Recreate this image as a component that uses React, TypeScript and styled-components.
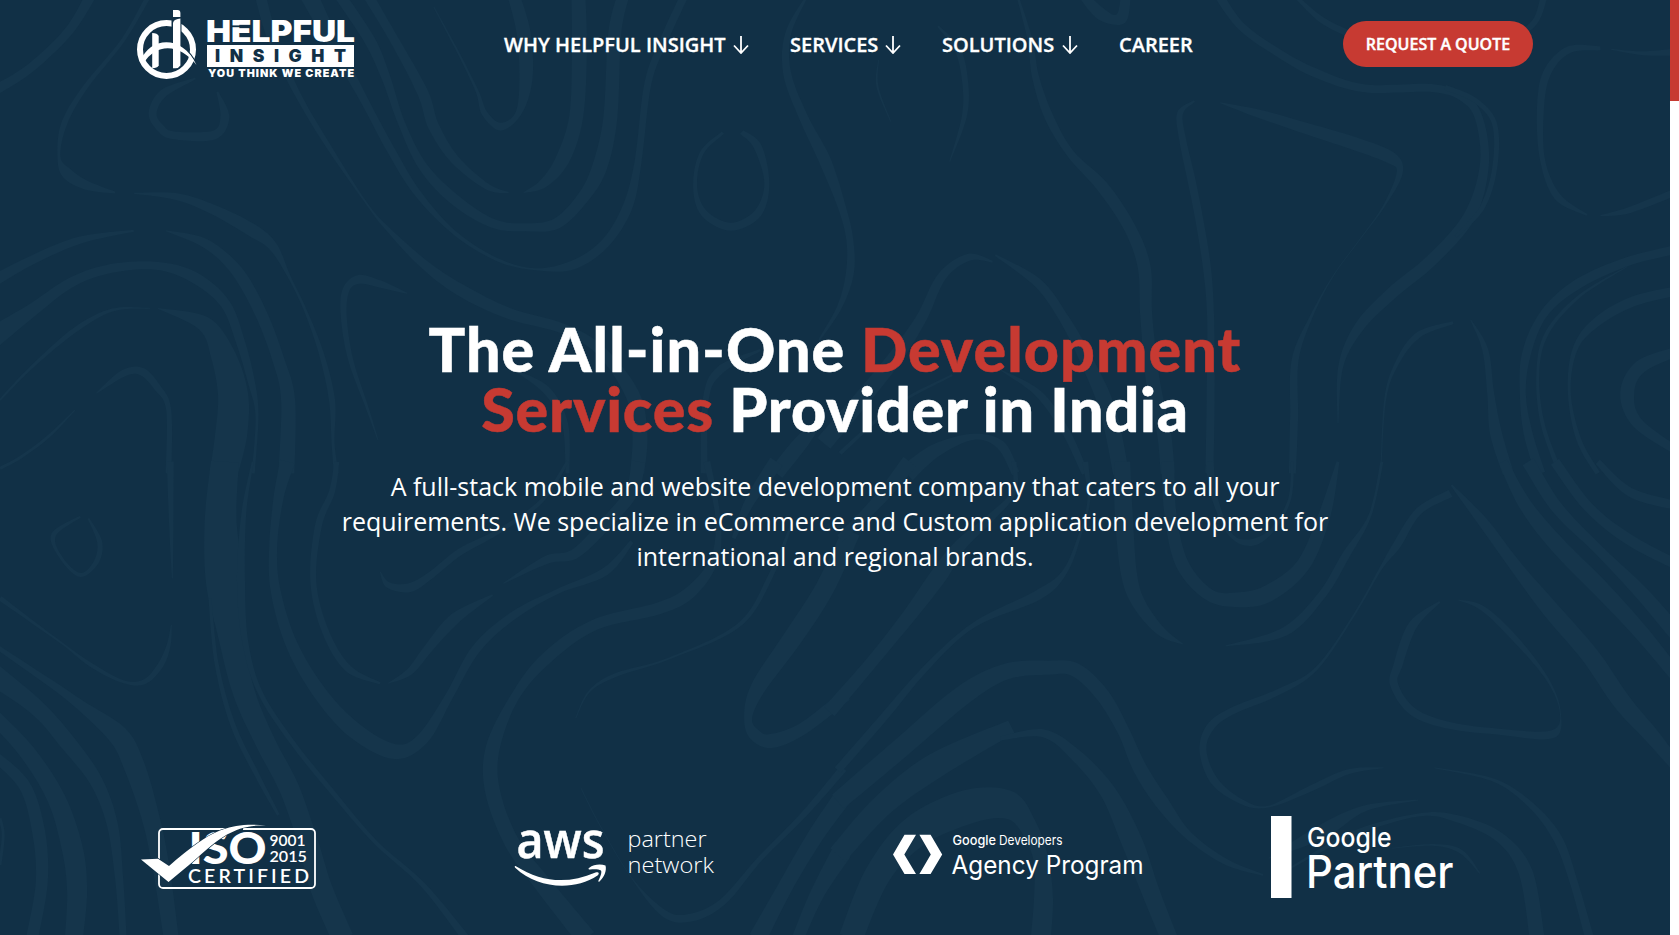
import React from "react";
import styled, { createGlobalStyle } from "styled-components";

const NAVY = "#113046";
const CONTOUR = "#15354b";
const RED = "#c73a32";

const GlobalStyle = createGlobalStyle`
  * { box-sizing: border-box; }
  html, body { margin: 0; padding: 0; background: ${NAVY}; overflow: hidden; }
  body { font-family: "Open Sans", "Noto Sans", sans-serif; color: #fff; }
  h1, p { margin: 0; }
`;

const Viewport = styled.div`
  display: flex;
  width: 100%;
  height: 935px;
  overflow: hidden;
`;

const Page = styled.main`
  position: relative;
  flex: 1;
  min-width: 0;
  display: flex;
  flex-direction: column;
  background: ${NAVY};
  overflow: hidden;
`;

const ScrollTrack = styled.div`
  width: 9px;
  background: #fff;
`;

const ScrollThumb = styled.div`
  height: 101px;
  background: ${RED};
`;

const Backdrop = styled.svg`
  position: absolute;
  inset: 0;
  fill: ${CONTOUR};
`;

const Header = styled.header`
  position: relative;
  display: flex;
  align-items: flex-start;
  height: 88px;
  padding: 8px 137px 0 136px;
`;

const LogoArt = styled.svg`
  flex: none;
  width: 222px;
  height: 74px;
`;

const Nav = styled.nav`
  display: flex;
  gap: 41px;
  margin-left: 146px;
  padding-top: 22px;
`;

const NavLink = styled.a<{ $width: number }>`
  display: flex;
  align-items: center;
  justify-content: space-between;
  width: ${(p) => p.$width}px;
  height: 30px;
  font-size: 20px;
  font-weight: 600;
  letter-spacing: 0;
  -webkit-text-stroke: 0.3px #fff;
  line-height: 30px;
  white-space: nowrap;
`;

const ArrowIcon = styled.svg`
  flex: none;
  width: 16px;
  height: 18px;
  fill: none;
  stroke: #fff;
  stroke-width: 1.8;
`;

const QuoteButton = styled.button`
  width: 190px;
  height: 46px;
  margin: 13px 0 0 auto;
  padding: 0;
  border: 0;
  border-radius: 23px;
  background: ${RED};
  color: #fff;
  font: 600 16px/24px "Open Sans", sans-serif;
  letter-spacing: 0;
  -webkit-text-stroke: 0.4px #fff;
  white-space: nowrap;
`;

const Hero = styled.section`
  position: relative;
  display: flex;
  flex-direction: column;
  align-items: center;
  padding-top: 231px;
  text-align: center;
`;

const Title = styled.h1`
  font: 900 61px/60px Lato, sans-serif;
  -webkit-text-stroke: 0.5px currentColor;
  white-space: nowrap;
`;

const TitleLine = styled.span<{ $spacing: number }>`
  display: block;
  letter-spacing: ${(p) => p.$spacing}px;
`;

const Accent = styled.span`
  color: ${RED};
`;

const Lead = styled.p`
  width: 1010px;
  margin-top: 30px;
  font-size: 25px;
  line-height: 35px;
`;

const Badges = styled.section`
  position: relative;
  display: grid;
  grid-template-columns: repeat(4, 378px);
  margin-top: auto;
  padding: 0 0 33px 137px;
`;

const BadgeArt = styled.svg`
  width: 260px;
  height: 90px;
  fill: #fff;
  overflow: visible;
`;

/* Contour lines: each stroke is a list of x, y, thickness triples. */
type Sheet = { x: number; y: number; strokes: number[][] };

const sheets: Sheet[] = [
  {
    x: 0,
    y: 0,
    strokes: [
      [175, -30, 11, 130, 90, 9, 60, 200, 9, 0, 262, 10, -40, 290, 10],
      [280, -20, 5, 230, 120, 4, 160, 260, 5, 120, 370, 6, 110, 470, 3, 125, 520, 11, 160, 555, 9, 215, 578, 2],
      [250, 580, 1, 330, 590, 7, 400, 630, 10, 470, 690, 13, 510, 740, 9, 540, 830, 3, 570, 930, 3, 600, 1060, 5, 620, 1200, 6, 622, 1330, 3, 628, 1420, 5],
      [760, 880, 1, 710, 852, 7, 670, 838, 9, 646, 870, 7, 642, 950, 6, 655, 1080, 5, 685, 1220, 3, 706, 1320, 1],
      [485, -20, 11, 510, 120, 10, 555, 280, 6, 610, 430, 5, 680, 600, 2, 720, 680, 4, 790, 790, 9, 860, 870, 12, 950, 940, 11, 1050, 985, 10, 1120, 1050, 10, 1180, 1180, 14, 1195, 1300, 15, 1190, 1420, 14],
      [960, 1110, 1, 1020, 1170, 8, 1055, 1270, 6, 1060, 1420, 4],
      [575, -20, 18, 620, 120, 13, 680, 300, 8, 730, 450, 8, 780, 580, 7, 850, 700, 4, 930, 780, 3, 1000, 808, 2, 1070, 795, 9, 1130, 730, 9, 1172, 620, 10, 1192, 480, 7, 1210, 250, 7, 1240, 120, 8, 1280, -20, 8],
      [632, -20, 11, 690, 120, 11, 720, 230, 9, 750, 370, 7, 790, 500, 9, 850, 600, 11, 920, 670, 9, 980, 682, 8, 1040, 670, 11, 1090, 590, 12, 1120, 500, 15, 1140, 350, 14, 1148, 100, 13, 1165, -20, 12],
      [685, -20, 10, 740, 130, 9, 790, 280, 11, 810, 380, 11, 850, 480, 9, 910, 560, 6, 950, 578, 1],
      [978, 578, 1, 1015, 550, 9, 1050, 480, 14, 1076, 350, 14, 1082, 150, 15, 1080, -20, 14],
      [810, 20, 1, 850, 140, 2, 890, 270, 3, 905, 340, 6, 935, 380, 8, 968, 340, 6, 982, 240, 13, 978, 100, 14, 958, -20, 12],
      [365, 235, 2, 305, 280, 8, 285, 340, 8, 300, 385, 8, 325, 406, 8, 400, 405, 9, 420, 350, 9, 406, 275, 2],
      [1350, 398, 3, 1310, 460, 4, 1298, 560, 4, 1315, 640, 7, 1365, 680, 8, 1415, 640, 8, 1432, 550, 5, 1415, 440, 8, 1385, 396, 5],
      [1510, -20, 2, 1472, 100, 6, 1470, 220, 8, 1500, 350, 9, 1540, 480, 12, 1572, 620, 8, 1587, 720, 7, 1587, 820, 8, 1568, 920, 5, 1530, 1020, 2],
      [1420, 1050, 2, 1345, 1110, 8, 1318, 1200, 6, 1315, 1420, 7],
      [1540, 1250, 2, 1500, 1320, 14, 1450, 1420, 15],
      [-20, 850, 12, 60, 780, 9, 150, 720, 7, 250, 692, 2],
      [310, 692, 1, 370, 720, 8, 410, 760, 10, 450, 830, 12, 490, 950, 12, 520, 1080, 12, 538, 1200, 14, 535, 1420, 16],
      [-20, 1020, 22, 60, 930, 13, 130, 850, 10, 200, 808, 9, 290, 797, 8, 360, 830, 11, 420, 910, 10, 450, 1030, 9, 470, 1150, 7, 480, 1250, 3, 473, 1420, 3],
      [0, 1200, 2, 60, 1100, 3, 140, 990, 5, 210, 930, 3, 280, 925, 1],
      [295, 925, 1, 380, 970, 15, 415, 1060, 24, 435, 1180, 30, 432, 1300, 32, 418, 1420, 28],
      [180, 1180, 1, 230, 1120, 7, 265, 1115, 8, 295, 1165, 7, 315, 1230, 5, 315, 1420, 6],
      [140, 1230, 1, 90, 1310, 3, 40, 1370, 3, 0, 1405, 3],
    ],
  },
  {
    x: 840,
    y: 0,
    strokes: [
      [330, -20, 2, 355, 120, 5, 365, 230, 7, 390, 350, 9, 430, 460, 8, 490, 560, 12, 540, 680, 12, 568, 800, 13, 572, 950, 12, 585, 1150, 14, 605, 1300, 14, 612, 1420, 14],
      [450, -20, 8, 490, 45, 12, 525, 55, 12, 534, -20, 10],
      [183, 78, 2, 220, 150, 6, 234, 250, 6, 232, 350, 5, 205, 485, 1],
      [72, 180, 1, 70, 260, 2, 95, 365, 1],
      [705, -20, 9, 750, 80, 8, 820, 160, 8, 890, 220, 9, 980, 265, 8, 1110, 265, 8, 1170, 300, 8, 1196, 370, 8, 1203, 500, 9, 1175, 650, 12, 1105, 780, 12, 1030, 880, 12, 970, 980, 10, 935, 1100, 5, 930, 1270, 1],
      [1130, 262, 5, 1185, 300, 5, 1222, 370, 5, 1223, 500, 5, 1200, 620, 5, 1150, 710, 3],
      [845, -20, 3, 900, 60, 6, 960, 108, 7],
      [1316, -20, 7, 1300, 60, 6, 1265, 110, 7],
      [662, 303, 2, 635, 340, 6, 640, 420, 7, 655, 530, 8, 670, 650, 8, 685, 800, 8, 692, 950, 7, 692, 1200, 8, 690, 1420, 8],
      [710, 308, 1, 780, 340, 8, 860, 380, 11, 960, 430, 13, 1030, 475, 12, 1045, 520, 6, 1015, 620, 2, 970, 720, 1, 920, 830, 1, 880, 950, 3, 850, 1080, 7, 848, 1250, 8, 845, 1420, 7],
      [1420, 145, 4, 1360, 150, 7, 1320, 220, 8, 1308, 330, 7, 1312, 480, 5, 1340, 590, 7, 1395, 645, 2],
      [1420, 647, 1, 1475, 630, 6, 1570, 570, 7],
      [1440, 148, 1, 1500, 160, 4, 1570, 155, 8],
      [-30, 1330, 17, 90, 1100, 15, 150, 960, 11, 190, 830, 9, 240, 772, 7, 285, 785, 2],
      [290, 765, 2, 370, 850, 9, 420, 960, 10, 460, 1080, 13, 500, 1230, 16, 525, 1420, 16],
      [0, 1360, 4, 100, 1220, 3, 210, 1125, 2],
      [300, 1110, 1, 370, 1180, 7, 420, 1290, 8, 458, 1420, 7],
      [125, 1420, 18, 180, 1350, 13, 250, 1310, 6, 300, 1335, 9, 328, 1420, 8],
      [1178, 960, 1, 1205, 1050, 6, 1215, 1180, 7, 1225, 1300, 12, 1248, 1420, 11],
      [1145, 968, 3, 1080, 1005, 6, 1040, 1090, 4, 1018, 1200, 2, 1010, 1420, 1],
      [1570, 745, 9, 1470, 785, 9, 1380, 850, 10, 1315, 940, 8, 1282, 1060, 9, 1275, 1180, 6, 1285, 1300, 9, 1308, 1420, 10],
      [1470, 800, 1, 1380, 890, 3, 1320, 1000, 4, 1303, 1120, 3, 1312, 1270, 4, 1345, 1420, 5],
      [1570, 870, 9, 1480, 905, 10, 1410, 970, 9, 1372, 1050, 5, 1362, 1180, 3, 1380, 1320, 5, 1415, 1420, 5],
      [1570, 1050, 9, 1495, 1100, 13, 1470, 1180, 14, 1490, 1270, 11, 1570, 1360, 8],
    ],
  },
  {
    x: 0,
    y: 465,
    strokes: [
      [150, 155, 2, 100, 210, 5, 115, 280, 3, 150, 330, 4, 180, 290, 5, 186, 230, 5, 165, 160, 2],
      [0, 400, 5, 60, 470, 3, 120, 540, 2, 170, 600, 4, 230, 650, 3, 270, 650, 5, 300, 600, 6, 315, 540, 4, 320, 480, 1],
      [-20, 530, 4, 90, 650, 7, 150, 720, 10, 220, 810, 20, 250, 900, 21, 280, 1050, 18, 300, 1200, 17, 320, 1420, 15],
      [-20, 620, 22, 70, 730, 16, 130, 840, 16, 180, 950, 13, 210, 1080, 11, 223, 1250, 8, 230, 1420, 7],
      [-20, 740, 14, 50, 860, 16, 105, 1000, 18, 135, 1150, 21, 144, 1280, 20, 138, 1420, 18],
      [-20, 860, 10, 45, 960, 12, 72, 1100, 13, 78, 1250, 12, 60, 1420, 12],
      [0, 1060, 3, 6, 1110, 3, 0, 1200, 3],
      [318, -10, 7, 320, 200, 4, 322, 340, 1],
      [420, -10, 28, 412, 170, 32, 420, 350, 38, 430, 500, 26, 455, 680, 22, 495, 830, 20, 540, 970, 20, 575, 1130, 20, 600, 1270, 22, 640, 1420, 22],
      [392, 400, 3, 405, 600, 4, 435, 780, 5, 480, 930, 5, 520, 1050, 3],
      [472, -10, 2, 455, 150, 5, 450, 350, 8, 458, 530, 6, 485, 680, 5, 545, 830, 5, 620, 980, 5, 700, 1130, 4, 790, 1260, 5, 870, 1420, 8],
      [537, -10, 15, 520, 100, 10, 510, 250, 8, 515, 380, 10, 545, 540, 12, 600, 690, 14, 665, 800, 16, 738, 860, 15, 790, 820, 12, 840, 690, 8, 890, 550, 9, 960, 450, 8, 1040, 380, 5, 1130, 320, 8, 1180, 230, 4],
      [629, -10, 5, 620, 80, 6, 595, 180, 7, 585, 350, 6, 608, 500, 7, 650, 610, 7, 710, 655, 2],
      [725, 655, 1, 765, 620, 7, 800, 550, 9, 850, 460, 11, 920, 390, 2],
      [710, 320, 1, 725, 360, 6, 765, 368, 9, 805, 330, 7, 860, 260, 7, 930, 200, 5, 1010, 110, 4, 1060, -10, 3],
      [940, 355, 1, 1020, 285, 8, 1075, 265, 10, 1140, 160, 12, 1180, 80, 13, 1192, -10, 14],
      [1320, -10, 7, 1340, 150, 5, 1335, 280, 8, 1290, 380, 12, 1230, 430, 12, 1110, 480, 11, 1020, 580, 12, 960, 700, 9, 920, 850, 14, 920, 980, 15, 955, 1130, 15, 1010, 1250, 17, 1095, 1420, 20],
      [1450, -10, 15, 1400, 110, 10, 1370, 220, 4],
      [1590, 200, 18, 1540, 370, 19, 1480, 520, 19, 1415, 670, 15, 1397, 760, 8, 1410, 810, 12, 1440, 828, 14, 1500, 790, 12, 1580, 690, 12],
      [1480, 170, 2, 1440, 330, 5, 1380, 480, 4, 1250, 580, 2, 1150, 630, 4, 1100, 680, 2, 1075, 760, 1],
      [1085, 970, 1, 1120, 1080, 1, 1180, 1240, 1, 1240, 1345, 7, 1290, 1358, 8, 1350, 1310, 7, 1420, 1180, 5, 1500, 1050, 6, 1575, 910, 8],
      [1415, 1420, 18, 1465, 1270, 15, 1520, 1120, 16, 1572, 1000, 18],
      [1490, 1420, 12, 1525, 1290, 14, 1572, 1160, 20],
    ],
  },
  {
    x: 840,
    y: 465,
    strokes: [
      [-20, 740, 14, 60, 590, 12, 130, 450, 14, 185, 330, 17, 225, 240, 12, 280, 160, 8, 325, 80, 5, 325, -10, 5],
      [130, -10, 16, 70, 110, 12, 0, 220, 8],
      [-4, 915, 8, 80, 760, 8, 160, 610, 6, 250, 480, 5, 370, 390, 10, 420, 320, 5, 450, 200, 3, 465, 100, 3, 458, -10, 6],
      [-4, 1010, 18, 120, 840, 20, 230, 690, 20, 310, 620, 16, 390, 608, 14, 440, 615, 14, 490, 690, 14, 530, 800, 12, 560, 910, 14, 600, 1010, 14, 650, 1110, 8, 720, 1190, 6, 790, 1230, 2],
      [-4, 1170, 20, 80, 1020, 22, 180, 900, 25, 320, 785, 14],
      [300, 820, 4, 380, 805, 8, 440, 870, 12, 500, 980, 16, 545, 1130, 21, 580, 1280, 18, 615, 1420, 17],
      [20, 1420, 24, 70, 1230, 26, 140, 1100, 32, 240, 1025, 34, 315, 1020, 28, 350, 1080, 18, 375, 1180, 15, 380, 1300, 19, 375, 1420, 20],
      [527, -10, 16, 530, 150, 18, 540, 330, 16, 560, 420, 13, 600, 500, 9, 640, 537, 1],
      [612, -10, 13, 618, 160, 12, 640, 300, 13, 690, 390, 12, 745, 404, 15, 800, 385, 17, 865, 300, 14, 905, 150, 12, 930, -10, 3],
      [690, -10, 8, 700, 100, 6, 730, 210, 4, 770, 232, 7, 810, 190, 4, 840, 100, 3, 845, -10, 3],
      [1012, -10, 3, 990, 150, 3, 945, 270, 8, 900, 390, 8, 830, 500, 9, 720, 543, 1],
      [1140, 85, 8, 1080, 140, 7, 1040, 240, 8, 1010, 310, 3, 960, 450, 2, 890, 610, 3, 820, 680, 6, 730, 740, 7, 690, 790, 8, 678, 860, 7, 700, 950, 8, 750, 1010, 5, 800, 1025, 2, 880, 970, 6, 950, 920, 5, 1015, 908, 1],
      [1142, 60, 2, 1200, 170, 10, 1260, 300, 12, 1325, 430, 17, 1400, 570, 18, 1460, 710, 18, 1520, 820, 15, 1580, 940, 10],
      [1120, 410, 2, 1070, 480, 9, 1042, 600, 9, 1035, 660, 8, 1070, 740, 8, 1140, 782, 7, 1230, 800, 6, 1330, 808, 8, 1345, 740, 1, 1320, 640, 3, 1260, 520, 6, 1200, 430, 5, 1155, 405, 1],
      [1110, 908, 1, 1220, 945, 3, 1290, 1020, 6, 1340, 1120, 9, 1370, 1250, 8, 1400, 1420, 9],
      [800, 1180, 1, 900, 1100, 14, 980, 1030, 6, 1080, 1005, 1],
      [840, 1210, 2, 960, 1105, 5, 1080, 1050, 3, 1150, 1060, 7, 1230, 1115, 10, 1280, 1220, 14, 1302, 1420, 15],
      [1030, 1150, 1, 1110, 1140, 2, 1160, 1160, 4, 1195, 1225, 1],
      [1238, -10, 9, 1280, 120, 13, 1340, 240, 16, 1420, 370, 17, 1500, 510, 15, 1590, 690, 12],
      [1285, -10, 13, 1340, 130, 12, 1420, 260, 10, 1500, 390, 14, 1590, 560, 16],
      [1335, -10, 10, 1400, 130, 10, 1480, 230, 11, 1590, 320, 10],
      [1415, -10, 6, 1480, 85, 9, 1590, 130, 9],
    ],
  },
];

type Point = [number, number];

function spline(points: Point[]): string {
  let d = "";
  for (let i = 0; i < points.length - 1; i++) {
    const a = points[Math.max(0, i - 1)];
    const b = points[i];
    const c = points[i + 1];
    const e = points[Math.min(points.length - 1, i + 2)];
    const nums = [
      b[0] + (c[0] - a[0]) / 6,
      b[1] + (c[1] - a[1]) / 6,
      c[0] - (e[0] - b[0]) / 6,
      c[1] - (e[1] - b[1]) / 6,
      c[0],
      c[1],
    ];
    d += "C" + nums.map((n) => n.toFixed(1)).join(" ");
  }
  return d;
}

function ribbon(sheet: Sheet, stroke: number[]): string {
  const pts: number[][] = [];
  for (let i = 0; i < stroke.length; i += 3) {
    pts.push([sheet.x + stroke[i] * 0.5355, sheet.y + stroke[i + 1] / 3, stroke[i + 2]]);
  }
  const left: Point[] = [];
  const right: Point[] = [];
  pts.forEach((p, i) => {
    const a = pts[Math.max(0, i - 1)];
    const b = pts[Math.min(pts.length - 1, i + 1)];
    const dx = b[0] - a[0];
    const dy = b[1] - a[1];
    const len = Math.hypot(dx, dy) || 1;
    const h = p[2] / 2;
    left.push([p[0] - (dy / len) * h, p[1] + (dx / len) * h]);
    right.unshift([p[0] + (dy / len) * h, p[1] - (dx / len) * h]);
  });
  return `M${left[0].join(" ")}${spline(left)}L${right[0].join(" ")}${spline(right)}Z`;
}

function Contours() {
  return (
    <Backdrop width="1670" height="935" viewBox="0 0 1670 935" aria-hidden="true">
      {sheets.map((sheet, s) => sheet.strokes.map((k, i) => <path key={`${s}-${i}`} d={ribbon(sheet, k)} />))}
    </Backdrop>
  );
}

type FitProps = {
  x: number;
  y: number;
  w: number;
  size: number;
  weight?: number;
  family?: string;
  fill?: string;
  glyphs?: boolean;
  children: string;
};

function Fit({ x, y, w, size, weight = 400, family = "Inter", fill = "#fff", glyphs = true, children }: FitProps) {
  return (
    <text
      x={x}
      y={y}
      fontSize={size}
      fontWeight={weight}
      fontFamily={`${family}, sans-serif`}
      fill={fill}
      textLength={w}
      lengthAdjust={glyphs ? "spacingAndGlyphs" : "spacing"}
    >
      {children}
    </text>
  );
}

function Logo() {
  return (
    <LogoArt viewBox="136 8 222 74" role="img" aria-label="Helpful Insight">
      <circle cx="166.5" cy="49.5" r="26.5" fill="none" stroke="#fff" strokeWidth="6" />
      <path d="M171.500 17h10v30h-10z" fill={NAVY} />
      <path d="M173 10h4.500q2.900 0 2.900 3v4h-7.400z" fill="#fff" />
      <path d="M173 22.500q1.500-3.500 7.400-3.900V65.500q-1.600 2.700-4.900 2.700H173z" fill="#fff" />
      <path d="M152.200 33q5.200 0 6.500 3V65.500q-1.500 2.700-6.500 2.700z" fill="#fff" />
      <path d="M183 47.500q9 6 13.500 17" fill="none" stroke={NAVY} strokeWidth="1.5" />
      <path d="M140.500 61C150 37 182 34 196.500 65C182 46 158 40 143 64z" fill="#fff" />
      <Fit x={206} y={42} w={149} size={30.5} weight={900}>HELPFUL</Fit>
      <path d="M231 26.300h13" stroke={NAVY} strokeWidth="1.8" />
      <path d="M207 45h147v22H207z" fill="#fff" />
      <Fit x={215} y={62.3} w={131} size={17.5} weight={900} fill={NAVY} glyphs={false}>INSIGHT</Fit>
      <Fit x={208} y={77} w={146} size={10.8} weight={900} glyphs={false}>YOU THINK WE CREATE</Fit>
    </LogoArt>
  );
}

function DownArrow() {
  return (
    <ArrowIcon viewBox="0 0 16 18">
      <path d="M8 0v17M1 9.500l7 7.500 7-7.500" />
    </ArrowIcon>
  );
}

const links = [
  { label: "WHY HELPFUL INSIGHT", width: 245, menu: true },
  { label: "SERVICES", width: 111, menu: true },
  { label: "SOLUTIONS", width: 136, menu: true },
  { label: "CAREER", width: 74, menu: false },
];

function IsoBadge() {
  return (
    <BadgeArt viewBox="137 812 260 90" role="img" aria-label="ISO certified">
      <rect x="159" y="829" width="156" height="59" rx="4" fill="none" stroke="#fff" strokeWidth="1.8" />
      <path d="M225 827h18v4h-18z" fill={NAVY} />
      <Fit x={188.5} y={864.3} w={78} size={43.5} weight={900} family="Lato">ISO</Fit>
      <path
        d="M141 859.500L158 858.700L169 866C177 859 190 848 203 839.500C216 831 234 822 266 825.500C247 825 238 829 227 834.500C212 843 199 857 189 865L168.500 882Z"
        stroke={NAVY}
        strokeWidth="1.2"
        paintOrder="stroke"
      />
      <Fit x={269.5} y={846} w={36} size={15} weight={600} family="Lato">9001</Fit>
      <Fit x={269.5} y={862.2} w={37.5} size={15} weight={600} family="Lato">2015</Fit>
      <Fit x={188} y={882.6} w={121} size={19.5} weight={600} family="Lato" glyphs={false}>CERTIFIED</Fit>
    </BadgeArt>
  );
}

function AwsBadge() {
  return (
    <BadgeArt viewBox="515 812 260 90" role="img" aria-label="AWS partner network">
      <g stroke="#fff" strokeWidth="0.5">
        <Fit x={516.5} y={857.5} w={88} size={51} weight={600} family="Open Sans">aws</Fit>
      </g>
      <path d="M515.500 866c27 17 53 18 80 6.500 3-1 4.500 1 2 3-24 16-60 13-82-7.500-1-1-1-2.500 0-2z" />
      <path d="M589 868c5-4 12-4 16.500-2.500 1.500 5-1.500 12-6 16-1 .5-1.500 0-1-1 2-4 3.500-8 2.500-10-2-1.500-7-1.500-11-1-1.500 0-2-.7-1-1.500z" />
      <Fit x={627.5} y={846.5} w={79} size={22.5} weight={300} family="Open Sans">partner</Fit>
      <Fit x={627.5} y={873.3} w={86.5} size={22.5} weight={300} family="Open Sans">network</Fit>
    </BadgeArt>
  );
}

function AgencyBadge() {
  return (
    <BadgeArt viewBox="893 812 260 90" role="img" aria-label="Google Developers Agency Program">
      <path d="M893 854.400L904.500 834.800H916L904.300 854.400 916 874H904.500z" />
      <path d="M942.200 854.400L930.600 834.800H919.400L930.800 854.400 919.400 874H930.600z" />
      <Fit x={952.5} y={844.7} w={43.5} size={13.5} weight={500}>Google</Fit>
      <Fit x={999} y={844.7} w={63.5} size={13.5}>Developers</Fit>
      <Fit x={951.5} y={873.7} w={192} size={25.5}>Agency Program</Fit>
    </BadgeArt>
  );
}

function PartnerBadge() {
  return (
    <BadgeArt viewBox="1271 812 260 90" role="img" aria-label="Google Partner">
      <path d="M1271 816h20.500v82H1271z" />
      <Fit x={1307} y={847} w={84.5} size={27.5} weight={500}>Google</Fit>
      <Fit x={1306} y={887.5} w={147.5} size={45} weight={500}>Partner</Fit>
    </BadgeArt>
  );
}

export default function App() {
  return (
    <>
      <GlobalStyle />
      <Viewport>
        <Page>
          <Contours />
          <Header>
            <Logo />
            <Nav>
              {links.map((l) => (
                <NavLink key={l.label} $width={l.width}>
                  {l.label}
                  {l.menu && <DownArrow />}
                </NavLink>
              ))}
            </Nav>
            <QuoteButton>REQUEST A QUOTE</QuoteButton>
          </Header>
          <Hero>
            <Title>
              <TitleLine $spacing={1.05}>
                The All-in-One <Accent>Development</Accent>
              </TitleLine>
              <TitleLine $spacing={0.8}>
                <Accent>Services</Accent> Provider in India
              </TitleLine>
            </Title>
            <Lead>
              A full-stack mobile and website development company that caters to all your requirements. We specialize
              in eCommerce and Custom application development for international and regional brands.
            </Lead>
          </Hero>
          <Badges>
            <IsoBadge />
            <AwsBadge />
            <AgencyBadge />
            <PartnerBadge />
          </Badges>
        </Page>
        <ScrollTrack>
          <ScrollThumb />
        </ScrollTrack>
      </Viewport>
    </>
  );
}
